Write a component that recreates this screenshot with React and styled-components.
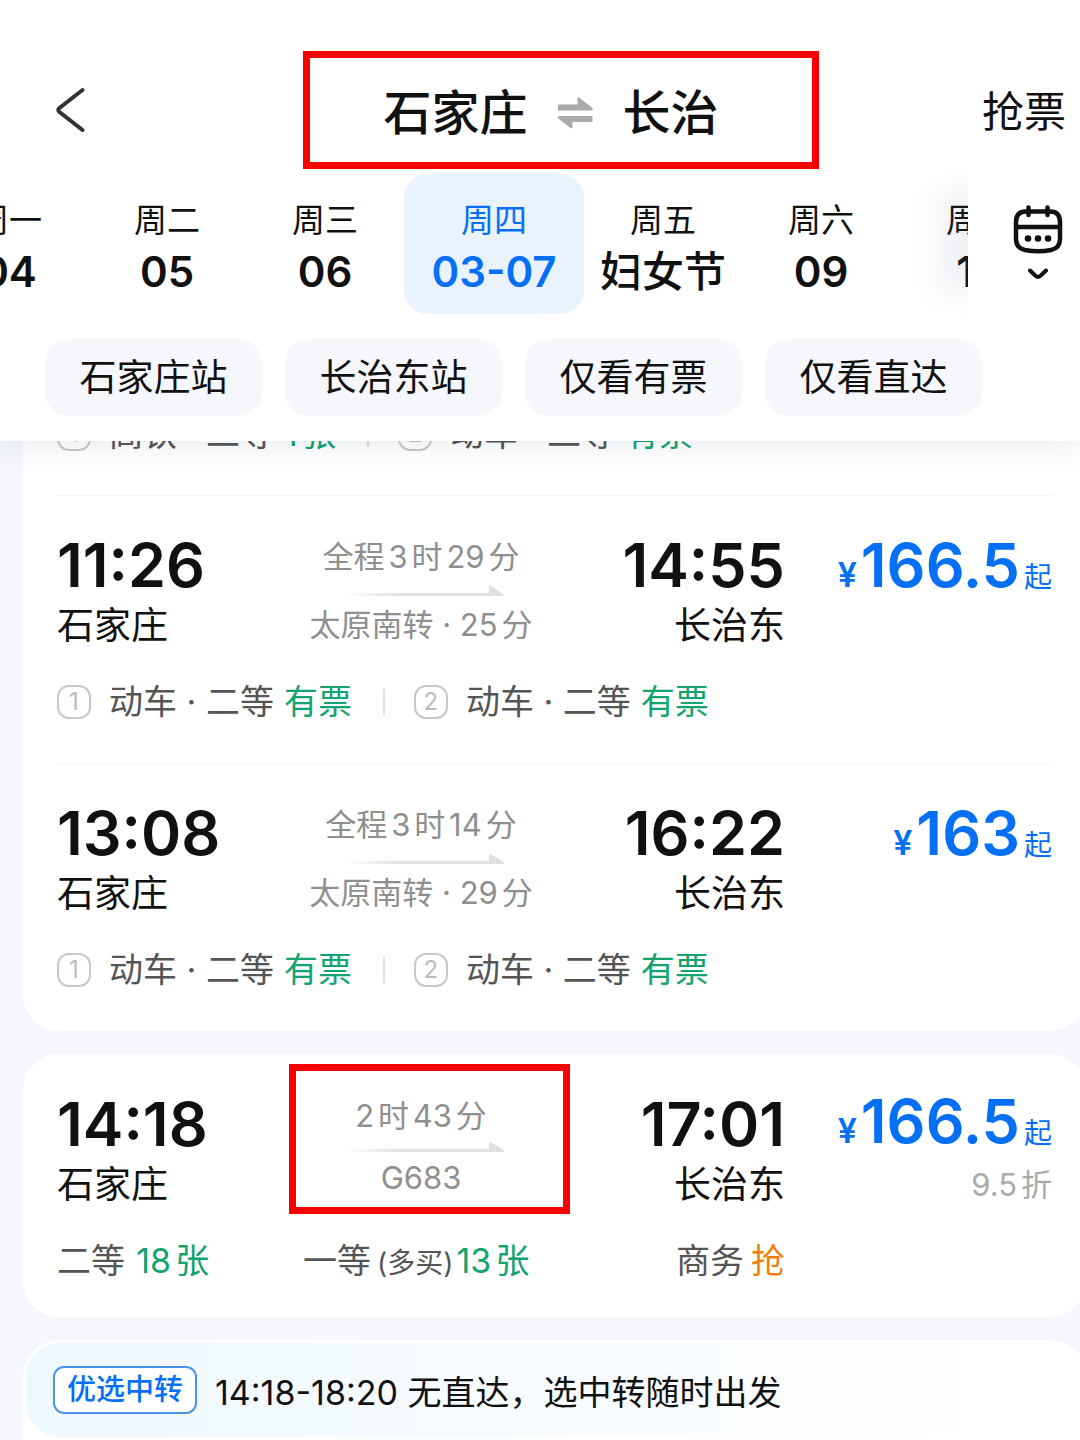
import React from 'react';
import styled, { createGlobalStyle } from 'styled-components';

const colors = {
  ink: '#111111',
  soft: '#555555',
  muted: '#8f8f8f',
  blue: '#0570f5',
  green: '#12a36f',
  orange: '#f07f09',
  page: '#f5f7fc',
  mark: '#fb0000',
};

const dates = [
  { day: '周一', date: '04' },
  { day: '周二', date: '05' },
  { day: '周三', date: '06' },
  { day: '周四', date: '03-07', active: true },
  { day: '周五', date: '妇女节', festival: true },
  { day: '周六', date: '09' },
  { day: '周日', date: '10' },
];

const filters = ['石家庄站', '长治东站', '仅看有票', '仅看直达'];

const clippedLegs = [
  { train: '高铁 · 二等', stock: '1张' },
  { train: '动车 · 二等', stock: '有票' },
];

const transferLegs = [
  { train: '动车 · 二等', stock: '有票' },
  { train: '动车 · 二等', stock: '有票' },
];

const transfers = [
  {
    depart: '11:26',
    arrive: '14:55',
    duration: '全程3时29分',
    via: '太原南转 · 25分',
    price: '166.5',
  },
  {
    depart: '13:08',
    arrive: '16:22',
    duration: '全程3时14分',
    via: '太原南转 · 29分',
    price: '163',
  },
];

const GlobalStyle = createGlobalStyle`
  *, *::before, *::after {
    box-sizing: border-box;
  }
  body {
    margin: 0;
    background: ${colors.page};
    color: ${colors.ink};
    font-family: Inter, 'Noto Sans CJK SC', sans-serif;
    text-autospace: normal;
  }
  button {
    padding: 0;
    border: 0;
    background: none;
    color: inherit;
    font: inherit;
    cursor: pointer;
  }
  h1, p {
    margin: 0;
  }
`;

const Shell = styled.div`
  display: flex;
  flex-direction: column;
  height: 100vh;
  overflow: hidden;
`;

const Header = styled.header`
  position: relative;
  z-index: 1;
  flex-shrink: 0;
  padding-bottom: 25px;
  background: #fff;
  box-shadow: 0 4px 28px rgba(40, 65, 95, 0.11);
`;

const TitleBar = styled.div`
  display: grid;
  grid-template-columns: 1fr auto 1fr;
  align-items: center;
  padding: 51px 14px 5px 56px;
`;

const BackButton = styled.button`
  display: flex;
  justify-self: start;
`;

const Route = styled.h1`
  display: flex;
  align-items: center;
  gap: 29px;
  height: 118px;
  padding: 5px 93px 0 73px;
  border: 7px solid ${colors.mark};
  font-size: 48px;
  line-height: 64px;
  font-weight: 500;
`;

const GrabButton = styled.button`
  justify-self: end;
  padding-top: 4px;
  font-size: 42px;
  line-height: 56px;
`;

const DateBar = styled.div`
  display: flex;
`;

const DateStrip = styled.nav`
  position: relative;
  display: flex;
  flex: 1;
  min-width: 0;
  overflow: hidden;

  &::after {
    content: '';
    position: absolute;
    top: 46px;
    right: -10px;
    bottom: 50px;
    width: 10px;
    box-shadow: 0 0 30px 28px rgba(90, 110, 145, 0.1);
    pointer-events: none;
  }
`;

const DateButton = styled.button`
  flex: 0 0 ${(props) => (props.$active ? 180 : 158)}px;
  height: 140px;
  padding-top: 8px;
  border-radius: 24px;
  background: ${(props) => (props.$active ? '#eaf2fe' : 'transparent')};
  color: ${(props) => (props.$active ? colors.blue : colors.ink)};
  white-space: nowrap;

  &:first-child {
    margin-left: -70px;
  }
`;

const DayName = styled.span`
  display: block;
  font-size: 33px;
  line-height: 48px;
`;

const DayNumber = styled.span`
  display: block;
  font-size: 42px;
  line-height: 56px;
  font-weight: ${(props) => (props.$festival ? 500 : 600)};
`;

const CalendarButton = styled.button`
  display: flex;
  flex: 0 0 112px;
  flex-direction: column;
  align-items: center;
  gap: 14px;
  padding: 30px 0 0 28px;
`;

const FilterBar = styled.div`
  display: flex;
  gap: 23px;
  padding: 25px 45px 0;
`;

const FilterChip = styled.button`
  width: 217px;
  height: 77px;
  border-radius: 24px;
  background: #f5f7fb;
  font-size: 37px;
  line-height: 44px;
`;

const List = styled.main`
  display: flex;
  flex: 1;
  flex-direction: column;
  gap: 23px;
  min-height: 0;
  padding-left: 23px;
  overflow: hidden;
`;

const Card = styled.section`
  flex-shrink: 0;
  margin-top: ${(props) => (props.$scrolled ? -29 : 0)}px;
  margin-right: -6px;
  padding: 0 34px;
  border-radius: ${(props) => (props.$scrolled ? '0 0 36px 36px' : '36px')};
  background: #fff;
`;

const Row = styled.article`
  padding: 40px 0 ${(props) => (props.$direct ? 32 : 39)}px;
`;

const Divider = styled.hr`
  height: 1px;
  margin: 39px 0 -1px;
  border: 0;
  background: #f3f4f6;

  ${Row} + & {
    margin: 0 0 -1px;
  }
`;

const Columns = styled.div`
  display: grid;
  grid-template-columns: 228fr 272fr 228fr 267fr;
`;

const Stop = styled.div`
  text-align: ${(props) => (props.$end ? 'right' : 'left')};
`;

const Time = styled.p`
  font-size: 61px;
  line-height: 60px;
  font-weight: 600;
`;

const Station = styled.p`
  margin-top: 9px;
  font-size: 37px;
  line-height: 44px;
`;

const Journey = styled.div`
  position: relative;
  display: flex;
  flex-direction: column;
  align-items: center;
  gap: ${(props) => (props.$direct ? 5 : 8)}px;
  padding-top: 2px;
  color: ${colors.muted};
  font-size: 31px;
  line-height: 40px;
  white-space: nowrap;
`;

const Highlight = styled.span`
  position: absolute;
  inset: -30px -13px -7px 4px;
  border: 7px solid ${colors.mark};
  pointer-events: none;
`;

const Price = styled.p`
  display: flex;
  align-items: baseline;
  justify-content: flex-end;
  gap: 4px;
  height: 60px;
  color: ${colors.blue};
  line-height: ${(props) => (props.$direct ? 54 : 60)}px;
`;

const Yen = styled.span`
  font-size: 34px;
  line-height: 34px;
  font-weight: 600;
`;

const Amount = styled.span`
  font-size: 61px;
  font-weight: 600;
`;

const PriceNote = styled.span`
  font-size: 28px;
  line-height: 28px;
`;

const Discount = styled.p`
  margin-top: 9px;
  color: #aaaaaa;
  font-size: 31px;
  line-height: 44px;
  text-align: right;
`;

const Legs = styled.div`
  display: flex;
  align-items: center;
  margin-top: ${(props) => (props.$first ? 0 : 32)}px;
  color: ${colors.soft};
  font-size: 34px;
  line-height: 44px;
`;

const Leg = styled.span`
  display: flex;
  align-items: center;

  & + & {
    margin-left: 31px;
    padding-left: 31px;
    background: linear-gradient(#dddddd, #dddddd) 0 50% / 2px 26px no-repeat;
  }
`;

const LegIndex = styled.span`
  width: 34px;
  height: 34px;
  margin-right: 18px;
  border: 2px solid #c8c8c8;
  border-radius: 12px;
  color: #bbbbbb;
  font-size: 24px;
  line-height: 30px;
  text-align: center;
`;

const Stock = styled.span`
  margin-left: 10px;
  color: ${(props) => (props.$hot ? colors.orange : colors.green)};
`;

const Seats = styled(Columns)`
  margin-top: 32px;
  color: ${colors.soft};
  font-size: 34px;
  line-height: 44px;
  white-space: nowrap;

  ${Stock} {
    margin-left: 7px;
  }
`;

const Seat = styled.p`
  padding-left: ${(props) => (props.$indent ? 18 : 0)}px;
  text-align: ${(props) => (props.$end ? 'right' : 'left')};
`;

const SeatNote = styled.span`
  margin: 0 -4px 0 6px;
  font-size: 28px;
`;

const BannerCard = styled(Card)`
  padding: 3px 3px 40px;
`;

const Banner = styled.div`
  display: flex;
  align-items: center;
  gap: 18px;
  height: 94px;
  padding-left: 27px;
  border-radius: 34px;
  background: linear-gradient(90deg, #eef8ff, #fafdff 60%, #ffffff);
  font-size: 34px;
  white-space: nowrap;
`;

const Tag = styled.span`
  padding: 0 12px;
  border: 2px solid #4a93e6;
  border-radius: 11px;
  background: #fff;
  color: ${colors.blue};
  font-size: 29px;
  line-height: 44px;
  font-weight: 500;
`;

const BackIcon = () => (
  <svg width="30" height="46" viewBox="0 0 30 46" fill="none" aria-hidden="true">
    <path
      d="M26.5 3 L3.2 21.2 Q1.5 23 3.2 24.8 L26.5 43"
      stroke="#333"
      strokeWidth="4"
      strokeLinecap="round"
    />
  </svg>
);

const SwapIcon = () => (
  <svg width="37" height="32" viewBox="0 0 37 32" fill="#aaaaaa" aria-hidden="true">
    <path d="M1 7.5 H20.500 V2 Q20.500 -.4 22.800 1.200 L35 10.500 Q36.800 13.500 34 13.500 H1 Z" />
    <path d="M35.500 19 H2.500 Q-.2 19 1.700 21.800 L13.500 31 Q15.500 32 15.500 30 V25 H35.500 Z" />
  </svg>
);

const CalendarIcon = () => (
  <svg width="50" height="50" viewBox="0 0 50 50" fill="none" aria-hidden="true">
    <path
      d="M13 7.500 H37 Q47 7.500 47 18 V35 Q47 44 38 46 Q25 48.500 12 46 Q3 44 3 35 V18 Q3 7.500 13 7.500 Z M3 23 H47 M15.500 3.500 V11 M34.500 3.500 V11"
      stroke="#111"
      strokeWidth="4.500"
      strokeLinecap="round"
    />
    <circle cx="15" cy="34.500" r="3.300" fill="#111" />
    <circle cx="25" cy="34.500" r="3.300" fill="#111" />
    <circle cx="35" cy="34.500" r="3.300" fill="#111" />
  </svg>
);

const DownIcon = () => (
  <svg width="22" height="12" viewBox="0 0 22 12" fill="none" aria-hidden="true">
    <path
      d="M3 2.500 L8.500 7.800 Q11 10 13.500 7.800 L19 2.500"
      stroke="#111"
      strokeWidth="4"
      strokeLinecap="round"
    />
  </svg>
);

const ArrowLine = () => (
  <svg width="168" height="12" viewBox="0 0 168 12" aria-hidden="true">
    <defs>
      <linearGradient id="arrow-fade">
        <stop offset="0.04" stopColor="#e0e0e0" stopOpacity="0" />
        <stop offset="0.4" stopColor="#e0e0e0" />
        <stop offset="1" stopColor="#e0e0e0" />
      </linearGradient>
    </defs>
    <path
      d="M0 8 H152 V1.500 Q152 0 153.500 .8 L166 8.500 Q168 11 165 11 H0 Z"
      fill="url(#arrow-fade)"
    />
  </svg>
);

const LegList = ({ legs, first }) => (
  <Legs $first={first}>
    {legs.map(({ train, stock }, index) => (
      <Leg key={index}>
        <LegIndex>{index + 1}</LegIndex>
        {train}
        <Stock>{stock}</Stock>
      </Leg>
    ))}
  </Legs>
);

const Trip = ({ depart, arrive, duration, via, price, discount, direct }) => (
  <Columns>
    <Stop>
      <Time>{depart}</Time>
      <Station>石家庄</Station>
    </Stop>
    <Journey $direct={direct}>
      <span>{duration}</span>
      <ArrowLine />
      <span>{via}</span>
      {direct && <Highlight />}
    </Journey>
    <Stop $end>
      <Time>{arrive}</Time>
      <Station>长治东</Station>
    </Stop>
    <div>
      <Price $direct={direct}>
        <Yen>¥</Yen>
        <Amount>{price}</Amount>
        <PriceNote>起</PriceNote>
      </Price>
      {discount && <Discount>{discount}</Discount>}
    </div>
  </Columns>
);

const App = () => (
  <Shell lang="zh-CN">
    <GlobalStyle />
    <Header>
      <TitleBar>
        <BackButton aria-label="返回">
          <BackIcon />
        </BackButton>
        <Route>
          <span>石家庄</span>
          <SwapIcon />
          <span>长治</span>
        </Route>
        <GrabButton>抢票</GrabButton>
      </TitleBar>
      <DateBar>
        <DateStrip>
          {dates.map(({ day, date, active, festival }) => (
            <DateButton key={day} $active={active}>
              <DayName>{day}</DayName>
              <DayNumber $festival={festival}>{date}</DayNumber>
            </DateButton>
          ))}
        </DateStrip>
        <CalendarButton aria-label="日历">
          <CalendarIcon />
          <DownIcon />
        </CalendarButton>
      </DateBar>
      <FilterBar>
        {filters.map((name) => (
          <FilterChip key={name}>{name}</FilterChip>
        ))}
      </FilterBar>
    </Header>
    <List>
      <Card $scrolled>
        <LegList legs={clippedLegs} first />
        {transfers.map((trip) => (
          <React.Fragment key={trip.depart}>
            <Divider />
            <Row>
              <Trip {...trip} />
              <LegList legs={transferLegs} />
            </Row>
          </React.Fragment>
        ))}
      </Card>
      <Card>
        <Row $direct>
          <Trip
            direct
            depart="14:18"
            arrive="17:01"
            duration="2时43分"
            via="G683"
            price="166.5"
            discount="9.5折"
          />
          <Seats>
            <Seat>
              二等<Stock>18张</Stock>
            </Seat>
            <Seat $indent>
              一等<SeatNote>(多买)</SeatNote>
              <Stock>13张</Stock>
            </Seat>
            <Seat $end>
              商务<Stock $hot>抢</Stock>
            </Seat>
          </Seats>
        </Row>
      </Card>
      <BannerCard>
        <Banner>
          <Tag>优选中转</Tag>
          <p>14:18-18:20 无直达，选中转随时出发</p>
        </Banner>
      </BannerCard>
    </List>
  </Shell>
);

export default App;
